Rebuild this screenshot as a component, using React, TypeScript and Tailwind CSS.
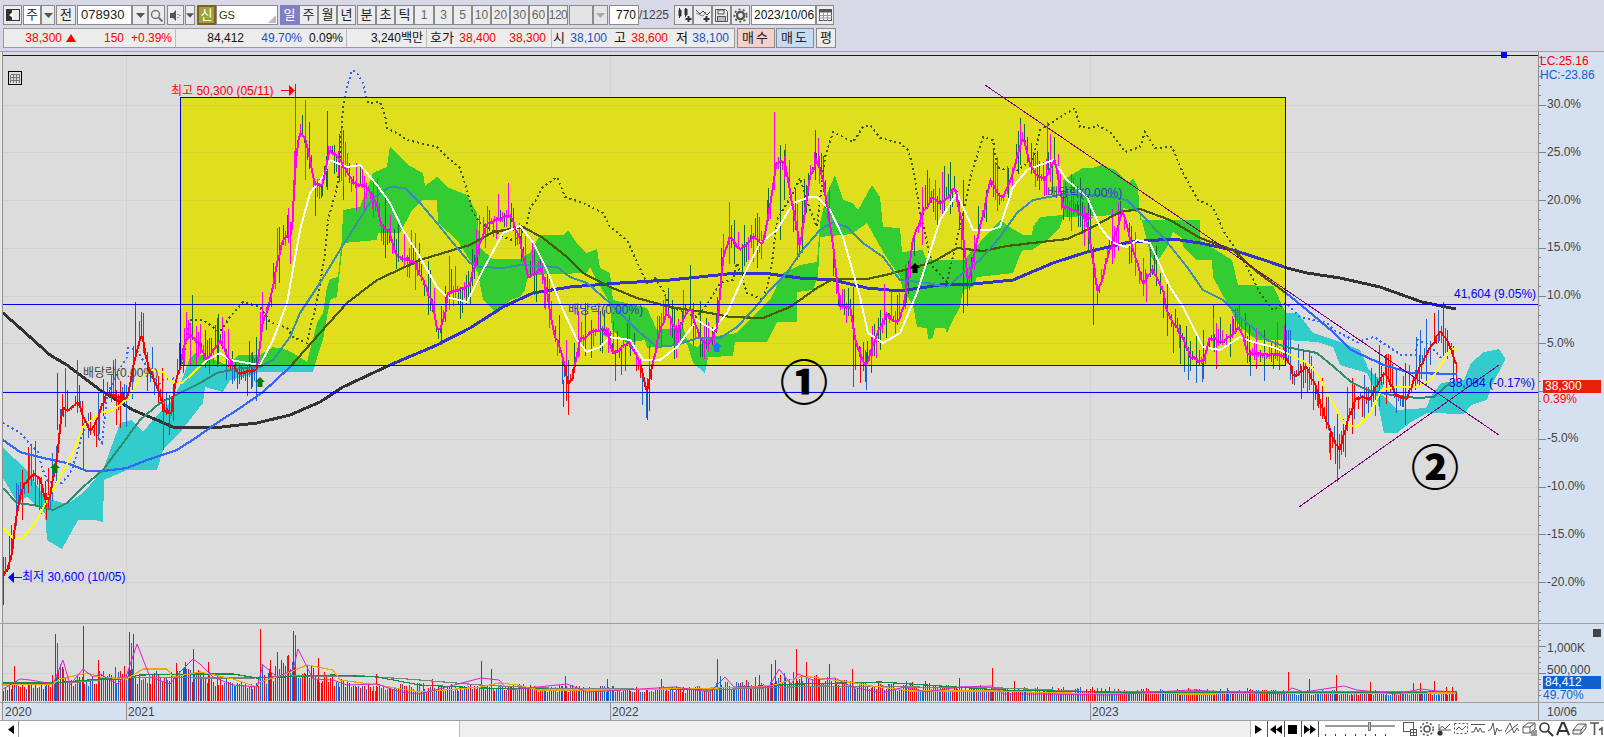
import React from "react";

type P = [number, number];
const CLOSE: P[] = [[3,575],[8,570],[12,553],[17,510],[23,487],[33,473],[40,480],[45,500],[50,497],[57,457],[62,407],[70,410],[78,402],[85,420],[90,433],[97,420],[107,393],[120,397],[127,400],[135,357],[142,335],[148,367],[160,393],[165,412],[172,412],[175,383],[181,365],[185,340],[192,335],[198,343],[207,360],[220,340],[228,357],[237,373],[257,370],[262,327],[270,300],[278,260],[283,240],[292,233],[295,167],[300,130],[307,145],[315,185],[322,185],[330,150],[340,160],[353,183],[365,185],[377,203],[382,227],[390,233],[397,257],[413,260],[423,280],[432,303],[438,333],[445,317],[448,293],[460,290],[470,283],[480,243],[487,223],[510,215],[520,240],[528,277],[542,270],[548,297],[553,330],[562,353],[568,383],[573,377],[580,340],[597,330],[607,330],[613,353],[630,343],[640,363],[647,393],[653,363],[660,330],[667,313],[677,333],[690,307],[700,337],[708,345],[717,327],[723,260],[730,237],[740,250],[753,237],[763,243],[770,207],[777,160],[785,163],[800,247],[810,177],[817,160],[823,180],[832,237],[840,307],[850,307],[855,340],[865,367],[875,340],[887,313],[897,325],[903,310],[913,240],[923,213],[933,197],[943,203],[955,187],[962,223],[968,283],[977,240],[985,207],[990,180],[1003,200],[1013,173],[1023,137],[1032,170],[1045,180],[1055,160],[1063,207],[1075,210],[1087,220],[1092,253],[1098,293],[1110,250],[1123,210],[1133,250],[1143,283],[1153,270],[1163,290],[1167,313],[1180,333],[1190,357],[1203,363],[1210,337],[1222,343],[1240,327],[1248,353],[1273,355],[1287,357],[1294,377],[1306,367],[1316,387],[1326,420],[1339,452],[1347,423],[1357,397],[1371,398],[1384,372],[1397,397],[1407,398],[1417,373],[1431,347],[1441,330],[1451,350],[1457,365]];
const SHORT: P[] = [[3,528],[13,538],[23,538],[37,520],[47,500],[60,477],[73,453],[83,427],[100,413],[113,410],[130,397],[140,377],[150,370],[163,372],[173,383],[182,383],[193,373],[207,360],[220,353],[230,360],[260,365],[273,340],[287,303],[300,230],[310,193],[323,177],[330,160],[347,167],[360,165],[377,185],[390,203],[403,230],[417,252],[437,287],[447,297],[467,302],[483,270],[503,233],[520,226],[533,242],[547,270],[563,310],[577,340],[587,352],[600,347],[610,337],[630,340],[643,360],[660,360],[677,347],[697,320],[713,330],[727,313],[743,277],[760,243],[777,230],[793,203],[810,197],[817,197],[830,210],[843,237],[860,297],[868,333],[883,343],[900,333],[917,293],[940,220],[957,193],[973,230],[990,230],[1000,227],[1013,187],[1027,170],[1053,160],[1067,180],[1087,197],[1100,227],[1113,243],[1127,247],[1137,240],[1150,243],[1170,287],[1183,307],[1203,347],[1220,350],[1240,337],[1253,342],[1273,347],[1287,353],[1307,363],[1317,373],[1331,400],[1344,423],[1357,427],[1371,413],[1381,390],[1397,387],[1417,387],[1431,380],[1444,360],[1451,348],[1457,350]];
const GREENMA: P[] = [[3,488],[17,503],[33,505],[53,510],[67,503],[83,487],[103,470],[120,447],[140,420],[160,403],[180,393],[200,383],[217,373],[240,368],[260,367],[273,360],[290,337],[300,313],[320,283],[340,250],[357,223],[373,198],[390,187],[405,188],[420,203],[437,223],[453,243],[470,263],[480,267],[503,268],[520,265],[557,267],[570,277],[587,283],[610,303],[637,330],[657,347],[677,345],[697,338],[720,338],[737,327],[753,310],[770,290],[787,273],[800,253],[820,230],[833,222],[847,227],[863,243],[883,257],[900,280],[927,283],[947,287],[963,273],[980,260],[1000,237],[1017,213],[1033,200],[1060,195],[1100,195],[1127,200],[1140,213],[1163,237],[1187,267],[1203,290],[1223,300],[1240,317],[1267,340],[1286,347],[1317,353],[1334,367],[1351,382],[1367,390],[1391,395],[1417,398],[1434,397],[1451,382]];
const LONG: P[] = [[3,313],[20,328],[50,355],[67,365],[100,390],[133,410],[157,420],[173,427],[213,428],[257,423],[290,415],[320,402],[343,387],[390,365],[437,345],[470,328],[503,307],[533,293],[570,287],[620,283],[670,280],[737,273],[770,274],[800,278],[833,280],[867,288],[900,291],[940,285],[973,284],[1013,280],[1053,263],[1087,252],[1130,242],[1173,239],[1200,243],[1233,250],[1267,261],[1287,268],[1307,273],[1340,278],[1380,287],[1422,302],[1456,309]];
const MID: P[] = [[3,440],[20,452],[43,458],[67,463],[87,471],[103,471],[127,468],[147,460],[177,450],[197,437],[217,423],[240,408],[263,392],[290,367],[320,333],[347,303],[377,280],[420,260],[470,245],[493,232],[523,227],[543,238],[567,257],[583,273],[610,287],[637,298],[670,307],[710,313],[730,317],[763,318],[790,307],[817,288],[833,279],[867,279],[890,274],[933,262],[957,248],[983,251],[1007,246],[1067,239],[1087,230],[1120,212],[1140,209],[1170,220],[1200,238],[1233,250],[1257,272],[1286,293],[1307,310],[1333,332],[1351,350],[1384,365],[1411,373],[1457,374]];
const LAG: P[] = [[3,423],[20,433],[33,447],[38,452],[42,468],[48,482],[62,483],[67,477],[72,470],[78,450],[83,430],[93,430],[102,443],[107,395],[115,377],[127,357],[128,348],[137,350],[147,367],[157,387],[163,380],[177,378],[182,363],[190,320],[203,320],[220,332],[230,317],[243,302],[260,307],[270,322],[287,328],[293,337],[307,343],[310,328],[315,310],[322,272],[325,253],[328,220],[335,195],[338,180],[343,108],[347,87],[352,70],[357,73],[363,83],[368,103],[380,102],[385,115],[387,128],[400,135],[407,140],[437,147],[447,157],[460,168],[467,190],[473,213],[480,223],[510,240],[520,237],[527,223],[530,207],[535,202],[542,188],[557,177],[565,197],[583,203],[603,213],[610,227],[627,240],[633,253],[642,273],[647,283],[655,278],[663,290],[670,307],[697,317],[708,303],[720,283],[733,280],[737,263],[747,293],[763,300],[768,283],[772,263],[777,220],[793,193],[800,178],[810,210],[817,227],[825,157],[833,132],[853,142],[863,127],[870,125],[880,138],[900,143],[908,150],[913,167],[915,180],[920,213],[933,267],[947,282],[967,197],[970,178],[983,137],[993,140],[997,167],[1013,173],[1033,160],[1040,130],[1067,113],[1075,108],[1080,127],[1093,128],[1097,125],[1110,132],[1125,152],[1140,147],[1145,132],[1155,148],[1172,147],[1183,173],[1198,200],[1213,207],[1223,230],[1247,267],[1260,293],[1273,310],[1286,303],[1300,317],[1327,323],[1334,330],[1357,342],[1374,337],[1401,355],[1416,355],[1417,340],[1430,345],[1441,358]];
const UPPER: P[] = [[3,448],[27,470],[45,498],[67,504],[83,493],[103,470],[120,423],[132,420],[143,432],[157,415],[172,400],[180,385],[190,358],[195,353],[207,357],[227,365],[239,355],[260,355],[273,347],[287,350],[293,353],[307,362],[317,323],[323,313],[327,287],[330,279],[338,277],[342,238],[343,210],[360,207],[373,173],[387,167],[390,146],[400,157],[410,166],[423,173],[425,186],[437,177],[447,187],[467,195],[477,213],[480,248],[493,259],[520,259],[530,253],[540,235],[563,235],[568,230],[578,245],[587,253],[597,249],[600,268],[610,273],[613,300],[647,308],[657,330],[683,327],[688,342],[697,347],[710,337],[737,333],[757,312],[770,300],[783,273],[800,265],[817,262],[820,223],[827,193],[835,175],[843,200],[853,203],[858,210],[872,185],[880,197],[883,227],[900,228],[902,252],[923,250],[925,257],[933,260],[965,260],[970,253],[1000,220],[1010,227],[1023,235],[1032,235],[1033,227],[1040,217],[1063,215],[1063,180],[1083,168],[1092,168],[1102,165],[1115,170],[1128,183],[1133,178],[1138,187],[1140,220],[1200,220],[1200,240],[1232,260],[1238,285],[1273,286],[1286,313],[1298,313],[1313,333],[1335,340],[1360,350],[1369,370],[1384,383],[1381,393],[1397,410],[1426,408],[1432,395],[1441,383],[1464,380],[1471,363],[1484,352],[1499,349],[1505,358]];
const LOWER: P[] = [[3,478],[17,502],[27,497],[45,513],[47,540],[62,549],[78,520],[95,520],[103,522],[104,480],[127,470],[157,470],[163,450],[182,430],[203,403],[205,387],[223,392],[230,380],[260,372],[313,372],[317,358],[323,340],[330,300],[337,297],[343,243],[377,240],[378,233],[400,233],[412,210],[423,200],[437,200],[438,223],[457,240],[478,273],[483,300],[497,313],[510,300],[520,297],[525,290],[528,275],[587,273],[590,267],[602,290],[610,303],[612,330],[627,343],[645,340],[647,348],[687,343],[693,363],[705,373],[708,357],[733,356],[735,342],[767,342],[777,322],[797,322],[797,292],[813,290],[818,277],[820,237],[852,234],[867,223],[883,252],[900,277],[903,290],[913,305],[917,327],[927,328],[928,339],[933,338],[935,328],[945,328],[947,333],[952,322],[960,307],[963,290],[973,287],[977,277],[1013,273],[1020,255],[1023,250],[1032,250],[1047,240],[1060,227],[1063,217],[1120,215],[1123,208],[1140,213],[1150,253],[1155,265],[1167,247],[1173,232],[1182,238],[1183,247],[1197,260],[1212,260],[1213,277],[1227,303],[1240,327],[1257,340],[1286,340],[1317,342],[1333,347],[1340,365],[1367,373],[1376,393],[1384,433],[1397,433],[1411,422],[1427,413],[1464,414],[1471,405],[1487,400],[1491,387],[1505,360]];
const FORCED: [number, number, number, number][] = [[135,302,357,1],[143,313,353,0],[192,295,340,0],[77,360,413,0],[65,368,427,0],[57,373,430,1],[83,423,468,0],[163,405,450,0],[295,97,185,1],[305,100,180,1],[327,111,190,0],[343,130,200,0],[774,112,190,1],[780,145,240,0],[784,150,200,0],[690,265,310,0],[815,130,180,0],[1020,118,165,0],[1047,122,170,1],[963,180,313,0],[853,287,387,0],[860,347,383,1],[866,352,390,0],[1093,247,325,0],[1213,305,333,0],[1188,347,380,0],[1202,363,382,0],[563,380,407,1],[568,380,415,1],[647,383,420,1],[642,377,405,0],[1337,453,482,0],[1329,433,453,0],[1354,385,410,1],[1364,393,420,0],[1379,348,373,1],[1416,337,377,0],[1420,330,363,0],[1453,350,393,0]];

const MAG: P[] = [[3,689],[20,679],[30,680],[53,684],[63,660],[70,685],[83,669],[93,677],[100,674],[117,684],[127,674],[137,644],[150,677],[170,684],[180,672],[193,659],[200,664],[213,677],[233,685],[257,687],[263,665],[277,677],[293,670],[298,649],[313,679],[333,680],[347,685],[377,684],[400,692],[420,694],[481,678],[499,680],[508,690],[567,684],[587,692],[675,687],[710,692],[725,677],[734,687],[769,687],[779,669],[791,684],[798,674],[813,680],[835,678],[852,687],[882,693],[904,687],[926,692],[960,687],[992,686],[1004,694],[1039,694],[1108,695],[1190,690],[1227,692],[1284,694],[1292,688],[1304,692],[1344,686],[1357,690],[1397,694],[1421,689],[1437,691],[1456,692]];
const ORG: P[] = [[3,685],[53,684],[60,679],[87,673],[100,677],[127,679],[143,669],[167,669],[173,677],[200,672],[233,679],[257,687],[260,682],[283,675],[307,665],[333,670],[340,680],[377,685],[420,692],[481,687],[499,683],[518,685],[538,690],[616,690],[715,688],[754,687],[774,685],[803,676],[842,681],[872,686],[911,691],[1000,691],[1058,693],[1190,694],[1456,693]];
const GRN: P[] = [[3,683],[53,683],[100,679],[123,679],[140,675],[200,674],[233,674],[257,678],[333,675],[377,677],[420,685],[481,688],[600,690],[700,689],[800,684],[880,682],[1000,690],[1100,692],[1190,693],[1457,692]];
const GRY: P[] = [[13,684],[80,682],[127,677],[200,678],[253,678],[293,676],[363,676],[407,679],[420,680],[480,685],[540,688],[710,690],[760,688],[820,686],[1000,688],[1100,692],[1270,692],[1457,692]];
const SPIKES: [number, number, number][] = [[14,666,1],[55,634,1],[57,643,0],[83,626,1],[98,660,1],[129,632,1],[131,643,0],[133,634,1],[176,663,1],[185,662,1],[193,649,1],[208,662,1],[260,629,1],[262,664,0],[270,660,1],[277,652,1],[293,631,1],[295,635,0],[318,658,1],[376,674,1],[432,679,1],[481,661,1],[491,669,1],[565,676,1],[607,679,1],[661,679,1],[717,659,1],[720,676,0],[771,664,1],[775,660,1],[796,649,1],[806,662,1],[829,664,1],[852,669,1],[959,678,1],[925,681,1],[992,668,1],[1014,681,1],[1227,688,1],[1247,688,1],[1288,672,1],[1309,679,1],[1336,675,1],[1370,682,1],[1413,683,1],[1420,683,1],[1434,681,1],[1446,687,1],[1452,687,1]];
const ENV: P[] = [[0,15],[50,18],[60,32],[70,20],[130,30],[140,24],[190,28],[250,15],[290,38],[320,24],[360,15],[500,14],[700,12],[780,24],[850,18],[1000,12],[1200,10],[1457,8]];

const pts = (a: P[]) => a.map((p) => p.join(",")).join(" ");
const interp = (a: P[], x: number) => {
  for (let i = 1; i < a.length; i++) {
    if (x <= a[i][0]) {
      const [x0, y0] = a[i - 1];
      const [x1, y1] = a[i];
      return x1 === x0 ? y1 : y0 + ((y1 - y0) * (x - x0)) / (x1 - x0);
    }
  }
  return a[a.length - 1][1];
};
let seed = 20231006;
const rnd = () => {
  seed = (seed * 1664525 + 1013904223) % 4294967296;
  return seed / 4294967296;
};
let upD = "";
let dnD = "";
const closeJ: P[] = [];
for (let i = 0; i < 770; i += 1) {
  const x = Math.round(3 + i * 1.89) + 0.5;
  const y = interp(CLOSE, x);
  closeJ.push([x, Math.round(y + (rnd() - 0.5) * 4)]);
  const a = Math.pow(rnd(), 2.2) * 36 + 1;
  const b = Math.pow(rnd(), 2.2) * 30 + 1;
  const s = `M${x} ${Math.round(y - a)}V${Math.round(y + b)}`;
  if (rnd() > 0.5) upD += s;
  else dnD += s;
}
for (const [x, t, b, u] of FORCED) {
  const s = `M${x + 0.5} ${t}V${b}`;
  if (u) upD += s;
  else dnD += s;
}
let volRed = "";
let volBlue = "";
for (let i = 0; i < 770; i += 1) {
  const x = Math.round(3 + i * 1.89) + 0.5;
  const h = interp(ENV, x) * (0.65 + rnd() * 0.6);
  const s = `M${x} 701V${Math.round(701 - h)}`;
  if (rnd() > 0.48) volRed += s;
  else volBlue += s;
}
for (const [x, t, r] of SPIKES) {
  const s = `M${x + 0.5} 701V${t}`;
  if (r) volRed += s;
  else volBlue += s;
}

type Pal = { cloud: string; long: string; lag: string; up: string; dn: string; mid: string; green: string; short: string; close: string };
const OUT: Pal = { cloud: "#33cccc", long: "#333333", lag: "#3366ff", up: "#ff0000", dn: "#1a66cc", mid: "#3366ff", green: "#2e8b6e", short: "#ffff00", close: "#ff0000" };
const IN: Pal = { cloud: "#33cc33", long: "#3333cc", lag: "#3f5a00", up: "#ff00ff", dn: "#0f6b3f", mid: "#4a5a00", green: "#3a8fa8", short: "#ffffff", close: "#ff00ff" };
const Line = ({ d, c, w }: { d: P[]; c: string; w: number }) => (
  <polyline points={pts(d)} fill="none" stroke={c} strokeWidth={w} shapeRendering="crispEdges" />
);
const Layer = ({ p, clip }: { p: Pal; clip: string }) => (
  <g clipPath={`url(#${clip})`}>
    <polygon points={pts(UPPER) + " " + pts([...LOWER].reverse())} fill={p.cloud} shapeRendering="crispEdges" />
    <Line d={LONG} c={p.long} w={3} />
    <polyline points={pts(LAG)} fill="none" stroke={p.lag} strokeWidth={2} strokeDasharray="2 3" shapeRendering="crispEdges" />
    <path d={dnD} stroke={p.dn} strokeWidth={1} fill="none" shapeRendering="crispEdges" />
    <path d={upD} stroke={p.up} strokeWidth={1} fill="none" shapeRendering="crispEdges" />
    <Line d={MID} c={p.mid} w={2.2} />
    <Line d={GREENMA} c={p.green} w={2} />
    <Line d={SHORT} c={p.short} w={2} />
    <Line d={closeJ} c={p.close} w={2} />
  </g>
);
const ArrowUp = ({ x, y, c }: { x: number; y: number; c: string }) => (
  <polygon points={`${x},${y - 5} ${x + 5},${y} ${x + 2.5},${y} ${x + 2.5},${y + 5} ${x - 2.5},${y + 5} ${x - 2.5},${y} ${x - 5},${y}`} fill={c} />
);
const ArrowDown = ({ x, y, c }: { x: number; y: number; c: string }) => (
  <polygon points={`${x},${y + 4} ${x + 6},${y} ${x + 2},${y} ${x + 2},${y - 4} ${x - 2},${y - 4} ${x - 2},${y} ${x - 6},${y}`} fill={c} />
);
const GRID = [-20, -15, -10, -5, 0, 5, 10, 15, 20, 25, 30];
const py = (p: number) => Math.round(391 - 9.55 * p) + 0.5;

const PriceChart = () => (
  <svg width={1536} height={571} viewBox="3 52 1536 571" className="block">
    <defs>
      <clipPath id="inBox"><rect x={181} y={98} width={1105} height={268} /></clipPath>
      <clipPath id="outBox"><path d="M0 0H1604V737H0ZM181 98H1286V366H181Z" clipRule="evenodd" /></clipPath>
    </defs>
    {GRID.map((g) => <line key={g} x1={3} x2={1539} y1={py(g)} y2={py(g)} stroke="#d2d2d2" />)}
    {[126.5, 610.5, 1090.5].map((x) => <line key={x} x1={x} x2={x} y1={52} y2={623} stroke="#d2d2d2" />)}
    <rect x={181} y={98} width={1105} height={268} fill="#dfdf1d" />
    {[30, 25, 20, 15, 10, 5].map((g) => <line key={g} x1={181} x2={1286} y1={py(g)} y2={py(g)} stroke="#d6d62a" />)}
    <Layer p={OUT} clip="outBox" />
    <Layer p={IN} clip="inBox" />
    <line x1={3} x2={1539} y1={304.5} y2={304.5} stroke="#0000ee" shapeRendering="crispEdges" />
    <line x1={3} x2={1539} y1={392.5} y2={392.5} stroke="#0000ee" shapeRendering="crispEdges" />
    <rect x={180.5} y={97.5} width={1105} height={268} fill="none" stroke="#0000cc" shapeRendering="crispEdges" />
    <line x1={3} x2={1539} y1={55.5} y2={55.5} stroke="#0000cc" shapeRendering="crispEdges" />
    <rect x={1501} y={52} width={6} height={6} fill="#0000ff" />
    <line x1={985} y1={85} x2={1499} y2={435} stroke="#800080" shapeRendering="crispEdges" />
    <line x1={1299} y1={507} x2={1499} y2={365} stroke="#800080" shapeRendering="crispEdges" />
    <ArrowUp x={55} y={468} c="#0a7a0a" />
    <ArrowUp x={260} y={382} c="#0a7a0a" />
    <ArrowUp x={717} y={347} c="#0080ff" />
    <ArrowUp x={915} y={268} c="#000000" />
    <ArrowDown x={122} y={397} c="#ff0000" />
    <ArrowDown x={607} y={333} c="#ff00ff" />
    <ArrowDown x={1087} y={217} c="#ff00ff" />
    <g fontSize={12} fontFamily="'Liberation Sans','Noto Sans CJK KR',sans-serif">
      <text x={171} y={95} fill="#ff0000">최고 50,300 (05/11)</text>
      <path d="M281 90.5H290" stroke="#ff0000" />
      <polygon points="289,85 295,90.5 289,96" fill="#ff0000" />
      <line x1={295.5} x2={295.5} y1={84} y2={97} stroke="#ff0000" />
      <polygon points="8,577.5 14,572 14,583" fill="#0000ff" />
      <path d="M14 577.5H22" stroke="#0000ff" />
      <text x={22} y={581} fill="#0000ff">최저 30,600 (10/05)</text>
      <text x={83} y={377} fill="#444444">배당락(0.00%)</text>
      <text x={568} y={314} fill="#3333cc">배당락(0.00%)</text>
      <text x={1047} y={197} fill="#3333cc">배당락(0.00%)</text>
      <text x={1454} y={298} fill="#0000ff">41,604 (9.05%)</text>
      <text x={1449} y={387} fill="#0000ff">38,084 (-0.17%)</text>
    </g>
    <g fontSize={48} fontFamily="'Noto Sans CJK KR',sans-serif" fontWeight={900} fill="#000000" textAnchor="middle">
      <text x={804} y={400}>①</text>
      <text x={1435} y={485}>②</text>
    </g>
    <g shapeRendering="crispEdges">
      <rect x={8.5} y={71.5} width={13} height={13} fill="#dcdcdc" stroke="#000000" />
      <path d="M10.5 74.5H19.5M10.5 77.5H19.5M10.5 80.5H19.5M10.5 74.5V82.5M13.5 74.5V82.5M16.5 74.5V82.5M19.5 74.5V82.5" stroke="#777777" fill="none" />
    </g>
  </svg>
);

const VolumeChart = () => (
  <svg width={1536} height={78} viewBox="3 624 1536 78" className="block">
    {[646.5, 673.5].map((y) => <line key={y} x1={3} x2={1539} y1={y} y2={y} stroke="#d2d2d2" />)}
    {[126.5, 610.5, 1090.5].map((x) => <line key={x} x1={x} x2={x} y1={624} y2={702} stroke="#d2d2d2" />)}
    <path d={volRed} stroke="#ff0000" strokeWidth={1} shapeRendering="crispEdges" />
    <path d={volBlue} stroke="#1a66cc" strokeWidth={1} shapeRendering="crispEdges" />
    <polyline points={pts(GRY)} fill="none" stroke="#808080" strokeWidth={1.2} shapeRendering="crispEdges" />
    <polyline points={pts(GRN)} fill="none" stroke="#109040" strokeWidth={1.2} shapeRendering="crispEdges" />
    <polyline points={pts(ORG)} fill="none" stroke="#f0a800" strokeWidth={1.2} shapeRendering="crispEdges" />
    <polyline points={pts(MAG)} fill="none" stroke="#e020d0" strokeWidth={1} />
  </svg>
);

const btn = "flex items-center justify-center shrink-0 h-5 border border-[#8a8a8a] bg-[#ececec] text-[#222222]";
const num = "flex items-center justify-center shrink-0 h-5 border border-[#8a8a8a] bg-[#ececec] text-[#666666] text-[12px]";
const kr = "flex items-center justify-center shrink-0 h-5 border border-[#8a8a8a] bg-[#ececec] text-[#222222] text-[13px]";

const CandlePlus = () => (
  <svg width={16} height={16} viewBox="0 0 16 16"><path d="M3 3h2v6H3zM9 2h2v6H9zM3.5 1v10M9.5 1v9" stroke="#333" fill="#333" strokeWidth={1} /><path d="M12.5 9v6M9.5 12h6" stroke="#333" strokeWidth={2} /></svg>
);
const LinePlus = () => (
  <svg width={16} height={16} viewBox="0 0 16 16"><path d="M1 3l4 4 3-3 4 4 3-3" stroke="#444" fill="none" /><path d="M1 6l4 2 3 1 3-4" stroke="#888" fill="none" /><path d="M11.5 9v6M8.5 12h6" stroke="#333" strokeWidth={2} /></svg>
);
const SaveIcon = () => (
  <svg width={15} height={15} viewBox="0 0 15 15"><path d="M1.5 1.5h10l2 2v10h-12z" fill="none" stroke="#555" /><rect x={4} y={2} width={6} height={4} fill="none" stroke="#555" /><rect x={3.5} y={8.5} width={8} height={5} fill="#bbb" stroke="#555" /></svg>
);
const GearIcon = () => (
  <svg width={15} height={15} viewBox="0 0 15 15"><circle cx={7.5} cy={7.5} r={3.6} fill="none" stroke="#555" strokeWidth={2.4} /><circle cx={7.5} cy={7.5} r={6.2} fill="none" stroke="#555" strokeWidth={1.8} strokeDasharray="2 2.4" /></svg>
);
const CalendarIcon = () => (
  <svg width={13} height={12} viewBox="0 0 13 12"><rect x={0.5} y={0.5} width={12} height={11} fill="#fff" stroke="#555" /><rect x={0.5} y={0.5} width={12} height={3} fill="#555" /><path d="M0 6.5h13M0 9h13M4.5 3v9M8.5 3v9" stroke="#999" /></svg>
);
const Caret = ({ c = "#555555" }: { c?: string }) => (
  <svg width={9} height={5} viewBox="0 0 9 5"><polygon points="0,0 9,0 4.5,5" fill={c} /></svg>
);

const Row1 = () => (
  <div className="flex h-[20px] mt-[5px] ml-[3px]">
    <div className={`${btn} w-[19px]`}>
      <svg width={14} height={14} viewBox="0 0 14 14"><rect x={0.5} y={1.5} width={13} height={11} fill="none" stroke="#333" /><rect x={1} y={2} width={5} height={10} fill="#333" /><polygon points="3,7 7,4 7,10" fill="#fff" /></svg>
    </div>
    <div className={`${kr} w-[18px] ml-[1px] !bg-white`}>주</div>
    <div className={`${btn} w-[14px]`}><Caret /></div>
    <div className={`${kr} w-[20px] ml-[1px]`}>전</div>
    <div className={`${kr} w-[55px] ml-[1px] !bg-white !justify-start pl-[3px]`}>078930</div>
    <div className={`${btn} w-[16px]`}><Caret /></div>
    <div className={`${btn} w-[17px]`}>
      <svg width={13} height={13} viewBox="0 0 13 13"><circle cx={5.5} cy={5.5} r={4} fill="none" stroke="#777" strokeWidth={1.5} /><path d="M8.5 8.5l4 4" stroke="#777" strokeWidth={2} /></svg>
    </div>
    <div className={`${btn} w-[17px] ml-[2px]`}>
      <svg width={13} height={13} viewBox="0 0 13 13"><polygon points="1,4 4,4 7,1 7,12 4,9 1,9" fill="#555" /><path d="M9 5v1M9 8v1M11 6v1" stroke="#555" /></svg>
    </div>
    <div className={`${btn} w-[10px] ml-[1px]`}><Caret /></div>
    <div className="flex items-center justify-center shrink-0 w-[19px] h-5 ml-[2px] border-2 border-[#85601a] bg-[#9ba33c] text-white text-[13px]">신</div>
    <div className="relative flex items-center shrink-0 w-[62px] h-5 bg-white border border-[#8a8a8a] pl-[2px] text-[11px] text-[#333300]">
      GS
      <svg className="absolute right-[1px] bottom-[1px]" width={8} height={8} viewBox="0 0 8 8"><polygon points="8,0 8,8 0,8" fill="#bbbbbb" /></svg>
    </div>
    <div className="flex items-center justify-center shrink-0 w-[19px] h-5 ml-[2px] bg-[#8080c0] text-white text-[13px]">일</div>
    <div className={`${kr} w-[19px]`}>주</div>
    <div className={`${kr} w-[19px]`}>월</div>
    <div className={`${kr} w-[19px]`}>년</div>
    <div className={`${kr} w-[19px] ml-[1px]`}>분</div>
    <div className={`${kr} w-[19px]`}>초</div>
    <div className={`${kr} w-[19px]`}>틱</div>
    <div className={`${num} w-[20px]`}>1</div>
    <div className={`${num} w-[19px]`}>3</div>
    <div className={`${num} w-[19px]`}>5</div>
    <div className={`${num} w-[19px]`}>10</div>
    <div className={`${num} w-[19px]`}>20</div>
    <div className={`${num} w-[19px]`}>30</div>
    <div className={`${num} w-[19px]`}>60</div>
    <div className={`${num} w-[20px] tracking-[-0.5px]`}>120</div>
    <div className={`${btn} w-[24px] ml-[1px] !bg-[#e4e4e4]`}></div>
    <div className={`${btn} w-[15px] !bg-[#e4e4e4]`}><Caret c="#aaaaaa" /></div>
    <div className={`${num} w-[30px] ml-[1px] !bg-white !justify-end pr-[2px] !text-[#111111]`}>770</div>
    <div className="flex items-center shrink-0 w-[35px] h-5 text-[12px] text-[#444444]">/1225</div>
    <div className={`${btn} w-[19px]`}><CandlePlus /></div>
    <div className={`${btn} w-[19px]`}><LinePlus /></div>
    <div className={`${btn} w-[19px]`}><SaveIcon /></div>
    <div className={`${btn} w-[19px]`}><GearIcon /></div>
    <div className={`${num} w-[65px] ml-[1px] !bg-white !justify-start pl-[2px] !text-[#111111]`}>2023/10/06</div>
    <div className={`${btn} w-[18px]`}><CalendarIcon /></div>
  </div>
);

const Row2 = () => (
  <div className="flex h-[20px] mt-[3px] ml-[3px] text-[12px]">
    <div className="flex items-center shrink-0 w-[732px] h-5 border border-[#9a9a9a] bg-[#ececec]">
      <span className="w-[58px] text-right text-[#ff0000]">38,300</span>
      <svg className="ml-[4px]" width={10} height={8} viewBox="0 0 10 8"><polygon points="5,0 10,8 0,8" fill="#ff0000" /></svg>
      <span className="w-[48px] text-right text-[#ff0000]">150</span>
      <span className="w-[48px] text-right text-[#ff0000]">+0.39%</span>
      <span className="w-[1px] h-full ml-[3px] bg-[#bbbbbb]"></span>
      <span className="w-[68px] text-right text-[#111111]">84,412</span>
      <span className="w-[58px] text-right text-[#1a50c0]">49.70%</span>
      <span className="w-[41px] text-right text-[#111111]">0.09%</span>
      <span className="w-[1px] h-full ml-[3px] bg-[#bbbbbb]"></span>
      <span className="w-[76px] text-right text-[#111111]">3,240백만</span>
      <span className="w-[1px] h-full ml-[3px] bg-[#bbbbbb]"></span>
      <span className="w-[28px] pl-[3px] text-[13px] text-[#111111]">호가</span>
      <span className="w-[41px] text-right text-[#ff0000]">38,400</span>
      <span className="w-[50px] text-right text-[#ff0000]">38,300</span>
      <span className="w-[1px] h-full ml-[5px] bg-[#bbbbbb]"></span>
      <span className="w-[13px] pl-[1px] text-[13px] text-[#111111]">시</span>
      <span className="w-[42px] text-right text-[#1a50c0]">38,100</span>
      <span className="w-[12px] ml-[7px] text-[13px] text-[#111111]">고</span>
      <span className="w-[42px] text-right text-[#ff0000]">38,600</span>
      <span className="w-[12px] ml-[8px] text-[13px] text-[#111111]">저</span>
      <span className="w-[41px] text-right text-[#1a50c0]">38,100</span>
    </div>
    <div className="flex items-center justify-center shrink-0 w-[38px] h-5 ml-[2px] border border-[#8a8a8a] bg-[#f5cfc9] text-[13px] tracking-[2px] text-[#222222]">매수</div>
    <div className="flex items-center justify-center shrink-0 w-[38px] h-5 ml-[1px] border border-[#8a8a8a] bg-[#c5dcf5] text-[13px] tracking-[2px] text-[#222222]">매도</div>
    <div className="flex items-center justify-center shrink-0 w-[20px] h-5 ml-[2px] border border-[#8a8a8a] bg-[#ececec] text-[13px] text-[#222222]">평</div>
  </div>
);

const AxisTicks = () => {
  const t: number[] = [];
  for (let p = -25; p <= 35; p += 1) t.push(p);
  return (
    <svg className="absolute left-0 top-0" width={65} height={571} viewBox="1539 52 65 571">
      {t.map((p) => (
        <line key={p} x1={1539} x2={p % 5 === 0 ? 1546 : 1541} y1={py(p)} y2={py(p)} stroke="#808080" shapeRendering="crispEdges" />
      ))}
    </svg>
  );
};
const AXIS_LABELS: [string, string][] = [
  ["30.0%", "top-[43px]"], ["25.0%", "top-[91px]"], ["20.0%", "top-[139px]"], ["15.0%", "top-[186px]"], ["10.0%", "top-[234px]"], ["5.0%", "top-[282px]"],
  ["-5.0%", "top-[377px]"], ["-10.0%", "top-[425px]"], ["-15.0%", "top-[473px]"], ["-20.0%", "top-[521px]"],
];

const BottomIcons = () => {
  const s = "#555555";
  const icons = [
    <g key="a"><rect x={1.5} y={1.5} width={10} height={9} fill="none" stroke={s} /><rect x={8.5} y={8.5} width={6} height={6} fill="#fff" stroke={s} /><path d="M11.5 8v7M8 11.5h7" stroke={s} /></g>,
    <g key="b"><circle cx={8} cy={8} r={3} fill="none" stroke={s} strokeWidth={1.5} /><circle cx={8} cy={8} r={6.3} fill="none" stroke={s} strokeWidth={1.6} strokeDasharray="2 2" /></g>,
    <g key="c"><path d="M3 9l3-4 3 3 5-5M3 3v6h12" stroke={s} fill="none" /><circle cx={4} cy={12} r={2.6} fill="#333" /></g>,
    <g key="d"><rect x={1.5} y={2.5} width={13} height={10} fill="none" stroke={s} strokeDasharray="2 2" /><path d="M3 9l3-3 3 3 4-4" stroke={s} fill="none" /></g>,
    <g key="e"><path d="M1 3.5h14M1 11l3 0 2-5 2 5 2-4 2 4h3" stroke={s} fill="none" /></g>,
    <g key="f"><path d="M1 10l3-2 2-6 2 12 2-7 2 3 3-1" stroke={s} fill="none" /></g>,
    <g key="g"><path d="M1 11l5-9 4 10 3-5 2 3M2 13L14 3" stroke={s} fill="none" /></g>,
    <g key="h"><path d="M2 6l5-4h7v6l-5 4H2zM2 6h7v6M9 6l5-4" stroke={s} fill="none" /><path d="M11 11v4M13 10v5M15 9v6" stroke="#333" /></g>,
    <g key="i"><circle cx={6.5} cy={6.5} r={4.5} fill="none" stroke="#333" strokeWidth={1.6} /><path d="M10 10l5 5" stroke="#333" strokeWidth={2} /></g>,
    <g key="j"><path d="M2 14L7 2h2l5 12M4.5 10h7" stroke="#333" strokeWidth={2} fill="none" /></g>,
    <g key="k"><path d="M1 9l5-6h8l-5 6zM1 9v4h8V9M9 13l5-6V3" stroke={s} fill="#eee" /></g>,
    <g key="l"><path d="M1 2h9M5.5 2v12M10 9l3-2v7" stroke={s} strokeWidth={1.6} fill="none" /></g>,
  ];
  return (
    <div className="flex ml-[7px] gap-[1px]">
      {icons.map((ic, i) => (
        <svg key={i} width={16} height={16} viewBox="0 0 16 16" className="shrink-0">{ic}</svg>
      ))}
    </div>
  );
};

const BottomBar = () => (
  <div className="flex h-[17px] border-t border-[#a0a0a0] bg-white">
    <div className="flex items-center justify-center shrink-0 w-[16px] ml-[3px] border-r border-[#999999]">
      <svg width={6} height={9} viewBox="0 0 6 9"><polygon points="6,0 6,9 0,4.5" fill="#000" /></svg>
    </div>
    <div className="w-[440px] shrink-0"></div>
    <div className="shrink-0 w-[792px] bg-[#efefef] border-x border-[#bbbbbb]"></div>
    <div className="flex shrink-0">
      {[
        <polygon key="p" points="3,2 10,6.5 3,11" fill="#000" />,
        <path key="r" d="M7 2L1 6.5 7 11zM13 2L7 6.5 13 11z" fill="#000" />,
        <rect key="s" x={2} y={2} width={9} height={9} fill="#000" />,
        <path key="f" d="M1 2L7 6.5 1 11zM7 2L13 6.5 7 11z" fill="#000" />,
      ].map((g, i) => (
        <div key={i} className="flex items-center justify-center w-[17px] border-r border-[#555555]">
          <svg width={14} height={13} viewBox="0 0 14 13">{g}</svg>
        </div>
      ))}
    </div>
    <div className="relative w-[70px] ml-[6px] shrink-0">
      <div className="mt-[4px] h-[2px] bg-[#999999]"></div>
      <div className="absolute left-[43px] top-[1px] w-[3px] h-[9px] bg-[#cccccc] border border-[#777777]"></div>
      <div className="absolute left-0 right-0 top-[13px] h-[2px] bg-[repeating-linear-gradient(90deg,#333333_0,#333333_1px,transparent_1px,transparent_10px)]"></div>
    </div>
    <BottomIcons />
  </div>
);

export default function App() {
  return (
    <div className="w-[1604px] h-[737px] overflow-hidden bg-[#d8d8e6] font-['Liberation_Sans','Noto_Sans_CJK_KR',sans-serif] text-[12px]">
      <div className="h-[51px] overflow-hidden">
        <Row1 />
        <Row2 />
      </div>
      <div className="flex h-[572px] border-t border-[#a0a0a0] bg-[#e8e8e8]">
        <div className="w-[2px] shrink-0"></div>
        <div className="w-[1536px] shrink-0 border-l border-[#909090] bg-[#dcdcdc]">
          <PriceChart />
        </div>
        <div className="relative flex-1 border-l border-[#909090] bg-[#d5e1f0] text-[12px] text-[#444444]">
          <AxisTicks />
          <span className="absolute left-[1px] top-[0px] text-[#ff0000]">LC:25.16</span>
          <span className="absolute left-[1px] top-[14px] text-[#1060d0]">HC:-23.86</span>
          {AXIS_LABELS.map(([l, top]) => (
            <span key={l} className={`absolute left-[8px] ${top}`}>{l}</span>
          ))}
          <span className="absolute left-[4px] top-[328px] w-[58px] h-[13px] leading-[13px] pl-[2px] bg-[#e8200a] text-white">38,300</span>
          <span className="absolute left-[4px] top-[341px] leading-[13px] text-[#ff0000]">0.39%</span>
        </div>
      </div>
      <div className="flex h-[79px] border-t border-[#a0a0a0] bg-[#e8e8e8]">
        <div className="w-[2px] shrink-0"></div>
        <div className="w-[1536px] shrink-0 border-l border-[#909090] bg-[#dcdcdc]">
          <VolumeChart />
        </div>
        <div className="relative flex-1 border-l border-[#909090] bg-[#d5e1f0] text-[#444444]">
          <svg className="absolute left-0 top-0" width={65} height={78} viewBox="1539 624 65 78">
            {[646, 673].map((y) => <line key={y} x1={1539} x2={1546} y1={y + 0.5} y2={y + 0.5} stroke="#808080" />)}
            {[630, 635, 640, 651, 657, 662, 668, 679, 684, 690, 695].map((y) => <line key={y} x1={1539} x2={1541} y1={y + 0.5} y2={y + 0.5} stroke="#808080" />)}
          </svg>
          <span className="absolute right-[3px] top-[5px] flex items-center justify-center w-[8px] h-[8px] bg-[#444444]"></span>
          <span className="absolute left-[8px] top-[15px]">1,000K</span>
          <span className="absolute left-[8px] top-[41px] h-[11px] leading-[11px]">500,000</span>
          <span className="absolute left-[4px] top-[52px] w-[58px] h-[13px] leading-[13px] pl-[2px] bg-[#1060d0] text-white">84,412</span>
          <span className="absolute left-[4px] top-[65px] h-[12px] leading-[12px] text-[#1060d0]">49.70%</span>
        </div>
      </div>
      <div className="flex h-[18px] border-t border-[#a0a0a0] bg-[#d5e1f0] text-[12px] text-[#444444]">
        <div className="w-[2px] shrink-0 bg-[#e8e8e8]"></div>
        <div className="w-[124px] shrink-0 border-l border-[#909090] pl-[2px]">2020</div>
        <div className="w-[484px] shrink-0 border-l border-[#909090] pl-[1px]">2021</div>
        <div className="w-[480px] shrink-0 border-l border-[#909090] pl-[1px]">2022</div>
        <div className="w-[448px] shrink-0 border-l border-[#909090] pl-[1px]">2023</div>
        <div className="flex-1 border-l border-[#909090] pl-[8px]">10/06</div>
      </div>
      <BottomBar />
    </div>
  );
}
